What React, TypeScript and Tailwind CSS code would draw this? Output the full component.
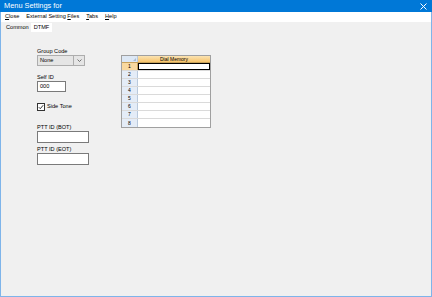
import React from 'react';

const rows = [1, 2, 3, 4, 5, 6, 7, 8];

const Ul: React.FC<{ c: string; rest: string }> = ({ c, rest }) => (
  <span><span className="underline">{c}</span>{rest}</span>
);

const App: React.FC = () => {
  return (
    <div className="w-[432px] h-[297px] flex flex-col bg-[#f0f0f0] font-['Liberation_Sans',sans-serif] text-black overflow-hidden">
      {/* title bar */}
      <div className="h-[12px] shrink-0 bg-[#0078d7] flex items-center justify-between pl-[4px] pr-[4px]">
        <span className="text-white text-[7.4px] leading-none">Menu Settings for</span>
        <svg width="7" height="7" viewBox="0 0 7 7" className="mr-[1px]">
          <path d="M0.5 0.5L6.5 6.5M6.5 0.5L0.5 6.5" stroke="white" strokeWidth="1" />
        </svg>
      </div>

      <div className="flex-1 flex flex-col border-x border-b border-[#7eb4ea]">
        {/* menu bar */}
        <div className="h-[10px] shrink-0 bg-white flex items-center gap-[7px] pl-[4px] text-[5.6px] leading-none">
          <Ul c="C" rest="lose" />
          <span>External Setting <span className="underline">F</span>iles</span>
          <Ul c="T" rest="abs" />
          <Ul c="H" rest="elp" />
        </div>

        {/* tab strip */}
        <div className="h-[10px] shrink-0 flex items-end pl-[3px] text-[5.6px] leading-none">
          <div className="h-[9px] px-[2px] flex items-center">Common</div>
          <div className="h-[9px] px-[3px] flex items-center bg-white">DTMF</div>
        </div>

        {/* page */}
        <div className="flex-1 flex items-start pl-[36px] pt-[17px] text-[5.6px] leading-none">
          <div className="w-[84px] flex flex-col">
            <span className="h-[6px]">Group Code</span>
            <div className="w-[48px] h-[11px] flex border border-[#adadad] bg-[#e5e5e5]">
              <div className="flex-1 flex items-center pl-[2px] border-r border-[#adadad]">None</div>
              <div className="w-[10px] flex items-center justify-center">
                <svg width="5" height="3" viewBox="0 0 5 3">
                  <path d="M0.5 0.5L2.5 2.5L4.5 0.5" stroke="#555" strokeWidth="0.8" fill="none" />
                </svg>
              </div>
            </div>

            <span className="h-[6px] mt-[9px]">Self ID</span>
            <div className="w-[29px] h-[11px] border border-[#7a7a7a] bg-white flex items-center pl-[2px]">000</div>

            <label className="mt-[11px] flex items-center gap-[2px]">
              <span className="w-[8px] h-[8px] border border-[#333] bg-white flex items-center justify-center">
                <svg width="6" height="6" viewBox="0 0 6 6">
                  <path d="M0.8 3.2L2.3 4.7L5.2 1.2" stroke="#222" strokeWidth="0.9" fill="none" />
                </svg>
              </span>
              <span>Side Tone</span>
            </label>

            <span className="h-[6px] mt-[14px]">PTT ID (BOT)</span>
            <div className="w-[52px] h-[12px] border border-[#7a7a7a] bg-white"></div>

            <span className="h-[6px] mt-[4px]">PTT ID (EOT)</span>
            <div className="w-[52px] h-[12px] border border-[#7a7a7a] bg-white"></div>
          </div>

          {/* grid */}
          <div className="mt-[6px] w-[90px] border border-[#a0a0a0] bg-white">
            <div className="flex h-[7px] border-b border-[#c8a25a]">
              <div className="w-[16px] bg-[#dde8f5] border-r border-[#b9c9dc] flex items-end justify-end pr-[1px] pb-[1px]">
                <svg width="3" height="3" viewBox="0 0 3 3"><path d="M3 0L3 3L0 3Z" fill="#a9bcd3" /></svg>
              </div>
              <div className="flex-1 bg-gradient-to-b from-[#fbe3b2] to-[#f7c46a] flex items-center justify-center text-[5px]">Dial Memory</div>
            </div>
            {rows.map((r) => (
              <div key={r} className="flex h-[8px] border-b border-[#dadada] last:border-b-0">
                <div
                  className={
                    r === 1
                      ? 'w-[16px] bg-[#f9d99f] border-r border-[#c8a25a] flex items-center justify-center text-[5px]'
                      : 'w-[16px] bg-[#e4ecf7] border-r border-[#b9c9dc] flex items-center justify-center text-[5px]'
                  }
                >
                  {r}
                </div>
                <div className={r === 1 ? 'flex-1 border-[1.5px] border-black' : 'flex-1'}></div>
              </div>
            ))}
          </div>
        </div>
      </div>
    </div>
  );
};

export default App;
